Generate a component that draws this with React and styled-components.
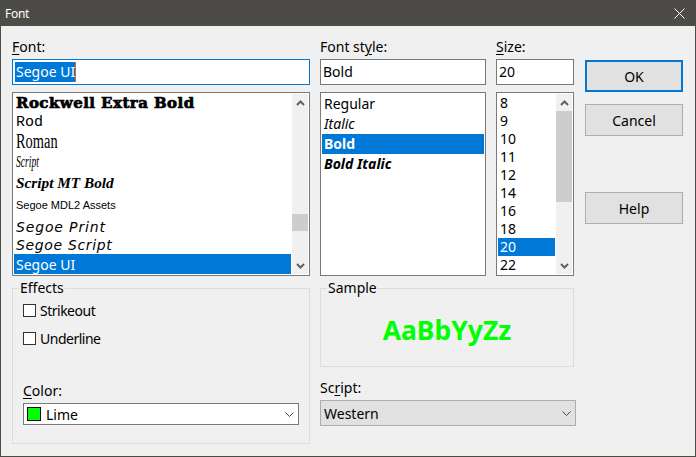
import React from "react";
import styled, { createGlobalStyle } from "styled-components";

const UI_FONT = `"Noto Sans", "Open Sans", sans-serif`;

const fontRows = [
  { name: "Rockwell Extra Bold", height: 18, family: `"DejaVu Serif", serif`, size: 15, weight: 900, stroke: 0.7, spacing: 0.45 },
  { name: "Rod", height: 18, family: `"Liberation Mono", monospace`, size: 15 },
  { name: "Roman", height: 23, family: `"Liberation Serif", serif`, size: 20, squeeze: 0.72 },
  { name: "Script", height: 18, family: `"Liberation Serif", serif`, size: 16, italic: true, squeeze: 0.6 },
  { name: "Script MT Bold", height: 24, family: `"Liberation Serif", serif`, size: 15.3, italic: true, weight: 700 },
  { name: "Segoe MDL2 Assets", height: 17, family: `"Liberation Sans", sans-serif`, size: 11 },
  { name: "Segoe Print", height: 29, family: `"DejaVu Sans", sans-serif`, size: 14, italic: true, spacing: 0.85 },
  { name: "Segoe Script", height: 13, line: 8, family: `"DejaVu Sans", sans-serif`, size: 14, italic: true, spacing: 0.65 },
  { name: "Segoe UI", height: 20, line: 22, size: 14, selected: true },
];

const styleRows = [
  { name: "Regular" },
  { name: "Italic", italic: true },
  { name: "Bold", weight: 700, selected: true },
  { name: "Bold Italic", italic: true, weight: 700 },
];

const sizeRows = ["8", "9", "10", "11", "12", "14", "16", "18", "20", "22"];

const Chevron = ({ up }) => (
  <svg width="9" height="6" viewBox="0 0 9 6">
    <path
      d={up ? "M1 5 L4.5 1.5 L8 5" : "M1 1 L4.5 4.5 L8 1"}
      fill="none"
      stroke="#606060"
      strokeWidth="2"
    />
  </svg>
);

const ComboChevron = () => (
  <svg width="9" height="5" viewBox="0 0 9 5">
    <path d="M0.5 0.5 L4.5 4.5 L8.5 0.5" fill="none" stroke="#444" strokeWidth="1" />
  </svg>
);

const App = () => (
  <>
    <GlobalStyle />
    <Dialog>
      <TitleBar>
        <span>Font</span>
        <svg width="11" height="11" viewBox="0 0 11 11">
          <path d="M0.5 0.5 L10.5 10.5 M10.5 0.5 L0.5 10.5" stroke="#fff" strokeWidth="1" />
        </svg>
      </TitleBar>
      <Body>
        <Main>
          <TopGrid>
            <Column>
              <Label>
                <u>F</u>ont:
              </Label>
              <Field>
                <Highlight>Segoe UI</Highlight>
              </Field>
              <ListBox>
                <Rows>
                  {fontRows.map((row) => (
                    <FontRow key={row.name} $row={row}>
                      <FontName $row={row}>{row.name}</FontName>
                    </FontRow>
                  ))}
                </Rows>
                <ScrollBar>
                  <ScrollButton>
                    <Chevron up />
                  </ScrollButton>
                  <Track $thumbTop={103} $thumbHeight={17}>
                    <Thumb />
                  </Track>
                  <ScrollButton>
                    <Chevron />
                  </ScrollButton>
                </ScrollBar>
              </ListBox>
            </Column>

            <Column>
              <Label>
                Font st<u>y</u>le:
              </Label>
              <Field>Bold</Field>
              <ListBox>
                <Rows>
                  {styleRows.map((row) => (
                    <StyleRow key={row.name} $row={row}>
                      {row.name}
                    </StyleRow>
                  ))}
                </Rows>
              </ListBox>
            </Column>

            <Column>
              <Label>
                <u>S</u>ize:
              </Label>
              <Field>20</Field>
              <ListBox>
                <Rows>
                  {sizeRows.map((size) => (
                    <SizeRow key={size} $selected={size === "20"}>
                      {size}
                    </SizeRow>
                  ))}
                </Rows>
                <ScrollBar>
                  <ScrollButton>
                    <Chevron up />
                  </ScrollButton>
                  <Track $thumbTop={0} $thumbHeight={91}>
                    <Thumb />
                  </Track>
                  <ScrollButton>
                    <Chevron />
                  </ScrollButton>
                </ScrollBar>
              </ListBox>
            </Column>
          </TopGrid>

          <BottomGrid>
            <EffectsGroup>
              <Legend>Effects</Legend>
              <EffectsBody>
                <CheckRow>
                  <CheckBox />
                  Strikeout
                </CheckRow>
                <CheckRow>
                  <CheckBox />
                  Underline
                </CheckRow>
                <ColorLabel>
                  <u>C</u>olor:
                </ColorLabel>
                <ColorCombo>
                  <Swatch />
                  <ComboText>Lime</ComboText>
                  <ComboChevron />
                </ColorCombo>
              </EffectsBody>
            </EffectsGroup>

            <SampleColumn>
              <SampleGroup>
                <Legend>Sample</Legend>
                <SampleText>AaBbYyZz</SampleText>
              </SampleGroup>
              <ScriptLabel>
                Sc<u>r</u>ipt:
              </ScriptLabel>
              <ScriptCombo>
                <ComboText>Western</ComboText>
                <ComboChevron />
              </ScriptCombo>
            </SampleColumn>
          </BottomGrid>
        </Main>

        <Buttons>
          <Button $primary>OK</Button>
          <Button>Cancel</Button>
          <HelpButton>Help</HelpButton>
        </Buttons>
      </Body>
    </Dialog>
  </>
);

export default App;

const GlobalStyle = createGlobalStyle`
  html, body {
    margin: 0;
    padding: 0;
    background: #f0f0f0;
  }
  u {
    text-underline-offset: 2px;
    text-decoration-thickness: 1px;
  }
`;

const Dialog = styled.div`
  width: 696px;
  height: 457px;
  box-sizing: border-box;
  border: 1px solid #4d4b48;
  border-top: none;
  background: #f0f0f0;
  font-family: ${UI_FONT};
  font-size: 14px;
  color: #000;
  overflow: hidden;
`;

const TitleBar = styled.div`
  height: 26px;
  margin: 0 -1px;
  padding: 0 11px 0 5px;
  background: #4d4b48;
  color: #fff;
  font-size: 12px;
  letter-spacing: -0.3px;
  display: flex;
  align-items: center;
  justify-content: space-between;
`;

const Body = styled.div`
  display: flex;
  gap: 9px;
  padding: 10px 0 0 11px;
`;

const Main = styled.div`
  width: 564px;
`;

const TopGrid = styled.div`
  display: grid;
  grid-template-columns: 298px 166px 78px;
  column-gap: 10px;
`;

const Column = styled.div`
  display: flex;
  flex-direction: column;
`;

const Label = styled.div`
  height: 23px;
  line-height: 22px;
`;

const Field = styled.div`
  height: 26px;
  box-sizing: border-box;
  border: 1px solid #7a7a7a;
  background: #fff;
  padding: 0 2px;
  line-height: 24px;
  margin-bottom: 7px;
  white-space: nowrap;
  &:has(span) {
    border-color: #0078d7;
  }
`;

const Highlight = styled.span`
  display: inline-block;
  background: #0078d7;
  color: #fff;
  line-height: 20px;
  padding: 0 0 0 1px;
  border-right: 1px solid #d86a1c;
`;

const ListBox = styled.div`
  height: 184px;
  box-sizing: border-box;
  border: 1px solid #7a7a7a;
  background: #fff;
  padding: 1px;
  display: flex;
  justify-content: space-between;
  overflow: hidden;
`;

const Rows = styled.div`
  flex: 1;
  min-width: 0;
`;

const FontRow = styled.div`
  height: ${(p) => p.$row.height}px;
  line-height: ${(p) => p.$row.line || p.$row.height}px;
  margin-right: 1px;
  padding-left: 2px;
  white-space: nowrap;
  background: ${(p) => (p.$row.selected ? "#0078d7" : "transparent")};
  color: ${(p) => (p.$row.selected ? "#fff" : "#000")};
`;

const FontName = styled.span`
  display: inline-block;
  transform-origin: left center;
  transform: scaleX(${(p) => p.$row.squeeze || 1});
  font-family: ${(p) => p.$row.family || "inherit"};
  font-size: ${(p) => p.$row.size}px;
  font-weight: ${(p) => p.$row.weight || 400};
  font-style: ${(p) => (p.$row.italic ? "italic" : "normal")};
  letter-spacing: ${(p) => p.$row.spacing || 0}px;
  -webkit-text-stroke: ${(p) => p.$row.stroke || 0}px #000;
`;

const StyleRow = styled.div`
  height: 20px;
  line-height: 20px;
  padding-left: 2px;
  font-style: ${(p) => (p.$row.italic ? "italic" : "normal")};
  font-weight: ${(p) => p.$row.weight || 400};
  background: ${(p) => (p.$row.selected ? "#0078d7" : "transparent")};
  color: ${(p) => (p.$row.selected ? "#fff" : "#000")};
`;

const SizeRow = styled.div`
  height: 18px;
  line-height: 18px;
  margin-right: 1px;
  padding-left: 2px;
  background: ${(p) => (p.$selected ? "#0078d7" : "transparent")};
  color: ${(p) => (p.$selected ? "#fff" : "#000")};
`;

const ScrollBar = styled.div`
  width: 16px;
  background: #f0f0f0;
  display: flex;
  flex-direction: column;
`;

const ScrollButton = styled.div`
  height: 17px;
  flex: none;
  display: flex;
  align-items: center;
  justify-content: center;
`;

const Track = styled.div`
  flex: 1;
  padding-top: ${(p) => p.$thumbTop}px;
  --thumb-height: ${(p) => p.$thumbHeight}px;
`;

const Thumb = styled.div`
  height: var(--thumb-height);
  background: #cdcdcd;
`;

const BottomGrid = styled.div`
  display: grid;
  grid-template-columns: 298px 256px;
  column-gap: 10px;
  margin-top: 2px;
`;

const Group = styled.fieldset`
  margin: 0;
  padding: 0;
  min-width: 0;
  box-sizing: border-box;
  border: 1px solid #dcdcdc;
`;

const Legend = styled.legend`
  margin-left: 6px;
  padding: 0 1px;
  height: 20px;
  line-height: 20px;
`;

const EffectsGroup = styled(Group)`
  height: 166px;
`;

const EffectsBody = styled.div`
  padding: 3px 10px 0;
`;

const CheckRow = styled.label`
  display: flex;
  align-items: center;
  gap: 4px;
  height: 18px;
  margin-bottom: 10px;
  letter-spacing: -0.5px;
`;

const CheckBox = styled.span`
  width: 13px;
  height: 13px;
  box-sizing: border-box;
  border: 1px solid #333;
  background: #fff;
`;

const ColorLabel = styled(Label)`
  margin-top: 33px;
`;

const Combo = styled.div`
  box-sizing: border-box;
  display: flex;
  align-items: center;
`;

const ComboText = styled.span`
  flex: 1;
`;

const ColorCombo = styled(Combo)`
  height: 22px;
  border: 1px solid #7a7a7a;
  background: #fff;
  padding: 0 4px 0 3px;
  gap: 5px;
`;

const Swatch = styled.span`
  width: 14px;
  height: 14px;
  box-sizing: border-box;
  border: 1px solid #000;
  background: #00ff00;
`;

const SampleColumn = styled.div`
  display: flex;
  flex-direction: column;
`;

const SampleGroup = styled(Group)`
  width: 254px;
  height: 89px;
`;

const SampleText = styled.div`
  padding-top: 14px;
  text-align: center;
  color: #00ff00;
  font-size: 26.5px;
  font-weight: 700;
  line-height: 36px;
`;

const ScriptLabel = styled(Label)`
  margin-top: 10px;
`;

const ScriptCombo = styled(Combo)`
  height: 26px;
  border: 1px solid #adadad;
  background: #e1e1e1;
  padding: 0 4px 0 3px;
`;

const Buttons = styled.div`
  width: 98px;
  padding-top: 24px;
  display: flex;
  flex-direction: column;
`;

const Button = styled.button`
  height: 32px;
  margin: 0 0 12px;
  padding: 0;
  box-sizing: border-box;
  border: ${(p) => (p.$primary ? "2px solid #0078d7" : "1px solid #adadad")};
  background: #e1e1e1;
  font: inherit;
  color: #000;
`;

const HelpButton = styled(Button)`
  margin-top: 44px;
`;
